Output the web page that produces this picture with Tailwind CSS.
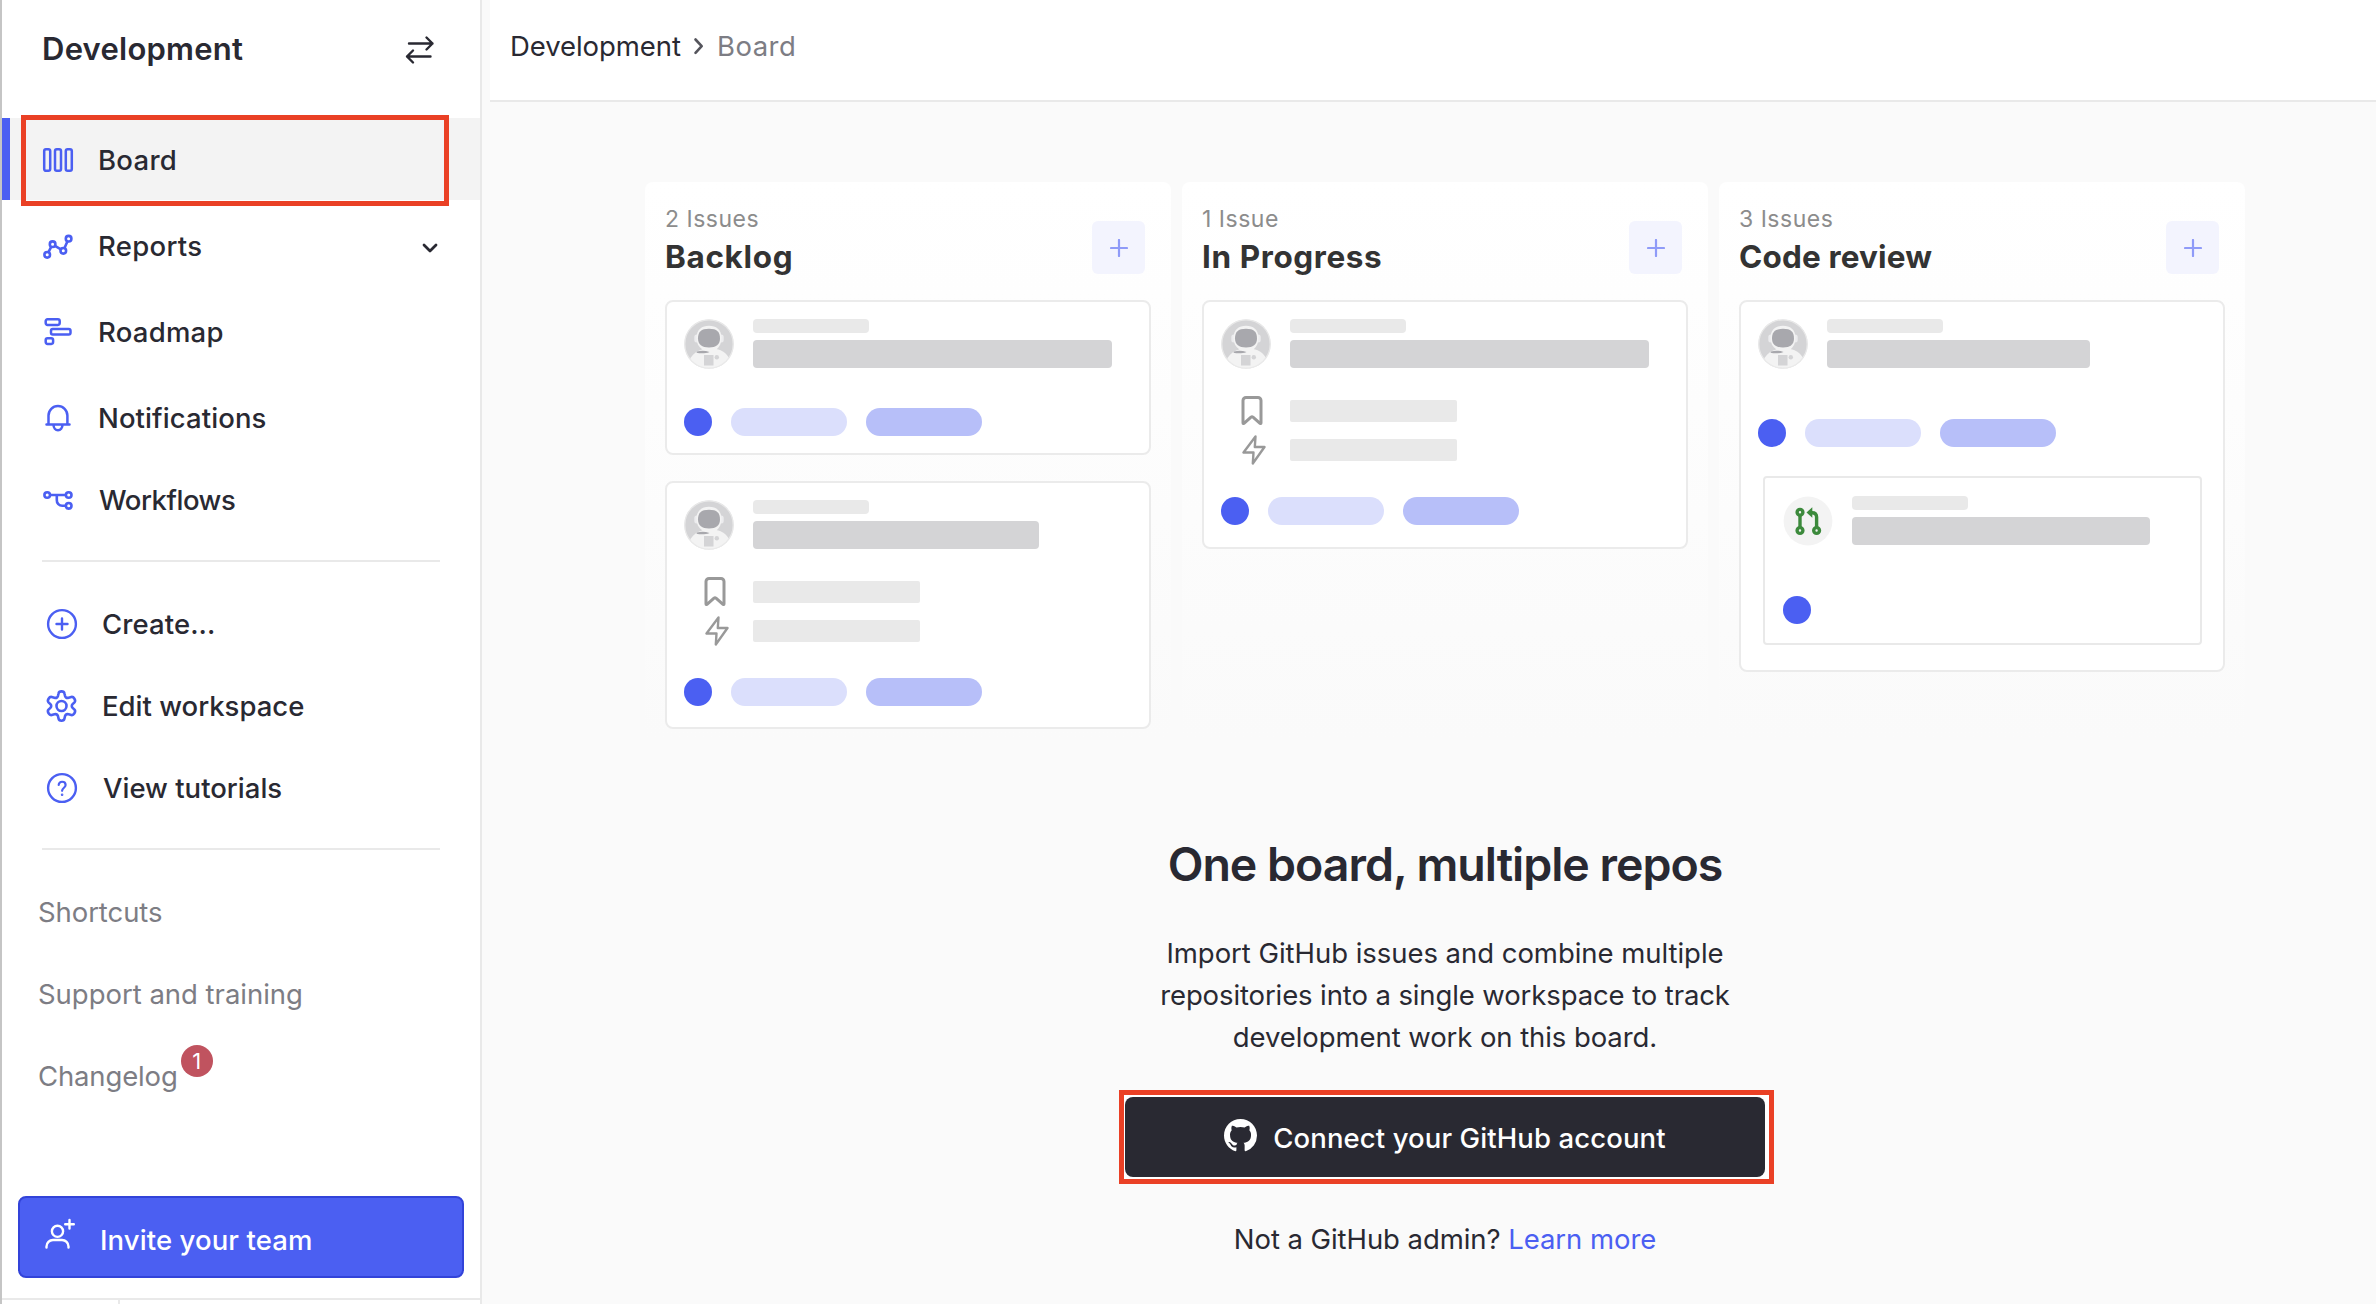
<!DOCTYPE html>
<html lang="en">
<head>
<meta charset="utf-8">
<title>Development board</title>
<script src="https://cdn.jsdelivr.net/npm/@tailwindcss/browser@4"></script>
</head>
<body class="w-[2376px] h-[1304px] overflow-hidden bg-[#fafafa] font-['Inter',sans-serif] text-[#292932] text-[27.5px] leading-[42px]">

<svg width="0" height="0" class="absolute">
  <defs>
    <symbol id="astronaut" viewBox="0 0 50 50">
      <clipPath id="face"><circle cx="25" cy="25" r="24.6"/></clipPath>
      <circle cx="25" cy="25" r="24.6" fill="#d4d4d6"/>
      <g clip-path="url(#face)">
        <path d="M4 45C7 34 15 31 20 30h12c6 1 13 5 15 14v8H4z" fill="#f3f3f3"/>
        <rect x="10.300" y="15.500" width="29.400" height="8" rx="2.500" fill="#ececee"/>
        <path d="M12.500 19C12.500 10.500 18 6.800 25 6.800S37.500 10.500 37.500 19c0 5-2 9-5 11.500L33 33H18l.5-2.500c-4-2.500-6-6.500-6-11.500z" fill="#f3f3f3"/>
        <path d="M14 19.500c0-6.500 3-9.700 11-9.700s11 3.200 11 9.700c0 6-4 9-11 9s-11-3-11-9z" fill="#a8a8ad"/>
        <path d="M13 32.500c4-1 8-1 12.500.4-4 1.800-9 1.800-13 .8z" fill="#a8a8ad"/>
        <rect x="20" y="36" width="9.500" height="10.500" fill="#d4d4d6"/>
        <circle cx="32.800" cy="38.200" r="2.200" fill="#d4d4d6"/>
      </g>
      <circle cx="25" cy="25" r="24.200" fill="none" stroke="#e9e9e9" stroke-width="1.200"/>
    </symbol>
    <symbol id="bookmark" viewBox="0 0 22 30">
      <path d="M2 27.500V5a3 3 0 0 1 3-3h12a3 3 0 0 1 3 3v22.500q0 1-1 .3L12 21.600q-1-.8-2 0L3 27.800q-1 .7-1-.3z" fill="none" stroke="#999" stroke-width="3" stroke-linejoin="round"/>
    </symbol>
    <symbol id="bolt" viewBox="0 0 24 30">
      <path d="M13.500 1.500L1.500 17.500H11.500L10.800 28.500L22.500 12H12.800z" fill="none" stroke="#999" stroke-width="2.400" stroke-linejoin="round"/>
    </symbol>
    <symbol id="plus" viewBox="0 0 18 18">
      <path d="M9 1v16M1 9h16" fill="none" stroke="#8f9bf8" stroke-width="2.200" stroke-linecap="round"/>
    </symbol>
  </defs>
</svg>

<div class="flex h-full">
  <!-- Sidebar -->
  <aside class="relative flex h-full w-[482px] shrink-0 flex-col border-l-2 border-r-2 border-l-[#c5c5c5] border-r-[#e9e9e9] bg-white font-medium">
    <div class="flex h-[118px] items-start justify-between pl-10 pr-[45px] pt-[27px]">
      <h1 class="text-[31px] leading-[44px] font-semibold tracking-[0.24px]">Development</h1>
      <svg class="mt-[8px] h-[30px] w-[30px]" viewBox="0 0 30 30" fill="none" stroke="#292932" stroke-width="2.400" stroke-linecap="round" stroke-linejoin="round"><path d="M4 8.500h23.500M21.500 2.500l6 6-6 6M25.500 21.500H2M8 15.500l-6 6 6 6"/></svg>
    </div>

    <nav class="flex flex-col">
      <a class="mb-1 flex h-[82px] items-center border-l-8 border-[#4b5ff2] bg-[#f3f3f3] pl-8 pt-[2px] tracking-[0.3px]">
        <svg class="mr-[24px] h-8 w-8" viewBox="0 0 32 32" fill="none" stroke="#4b5ff2" stroke-width="2.500"><rect x="2.200" y="5.200" width="6" height="21.600" rx="1.800"/><rect x="13" y="5.200" width="6" height="21.600" rx="1.800"/><rect x="23.800" y="5.200" width="6" height="21.600" rx="1.800"/></svg>
        Board
      </a>
      <a class="mb-1 flex h-[82px] items-center pl-10 pr-[42px] pt-[2px] tracking-[0.3px]">
        <svg class="mr-[24px] h-8 w-8" viewBox="0 0 32 32" fill="none" stroke="#4b5ff2" stroke-width="2.600"><circle cx="5.200" cy="24.800" r="2.800"/><circle cx="10.600" cy="14.200" r="2.800"/><circle cx="21.300" cy="20.800" r="2.800"/><circle cx="26.600" cy="8.700" r="2.800"/><path d="M6.500 22.200l2.800-5.500M13 15.900l5.900 3.400M22.400 18.200l3.100-7"/></svg>
        Reports
        <svg class="ml-auto mt-[3px] h-[10px] w-[16px]" viewBox="0 0 16 10" fill="none" stroke="#292932" stroke-width="2.800" stroke-linecap="round" stroke-linejoin="round"><path d="M2 2l6 6 6-6"/></svg>
      </a>
      <a class="mb-1 flex h-[82px] items-center pl-10 pt-[2px] tracking-[0.25px]">
        <svg class="mr-[24px] h-8 w-8" viewBox="0 0 32 32" fill="none" stroke="#4b5ff2" stroke-width="2.500"><rect x="3.700" y="3.300" width="14" height="5.600" rx="1.800"/><rect x="9" y="12.900" width="19.500" height="5.600" rx="1.800"/><rect x="3.700" y="22.300" width="7.400" height="5.600" rx="1.800"/></svg>
        Roadmap
      </a>
      <a class="flex h-[82px] items-center pl-10 pt-[2px] tracking-[0.1px]">
        <svg class="mr-[24px] h-8 w-8" viewBox="0 0 32 32" fill="none" stroke="#4b5ff2" stroke-width="2.500" stroke-linecap="round" stroke-linejoin="round"><path d="M4.500 22.500h23M6.500 22.500V13.500a9.300 9.300 0 0 1 18.900 0v9M11.500 22.800a4.500 5.500 0 0 0 9 0"/></svg>
        Notifications
      </a>
      <a class="flex h-[82px] items-center pl-10 pt-[2px] tracking-[-0.45px]">
        <svg class="mr-[25px] h-8 w-8" viewBox="0 0 32 32" fill="none" stroke="#4b5ff2" stroke-width="2.600"><circle cx="5.200" cy="11" r="2.800"/><circle cx="26.700" cy="11" r="2.800"/><circle cx="26.700" cy="21.800" r="2.800"/><path d="M8 11h15.800M14.800 11v5a5.500 5.500 0 0 0 5.500 5.800h3.600"/></svg>
        Workflows
      </a>
    </nav>
    <div class="ml-10 mt-[20px] h-[2px] w-[398px] bg-[#e9e9e9]"></div>

    <nav class="mt-[20px] flex flex-col">
      <a class="flex h-[82px] items-center pl-[43px] pt-[2px] tracking-[0.1px]">
        <svg class="mr-[23px] h-[34px] w-[34px]" viewBox="0 0 34 34" fill="none" stroke="#4b5ff2" stroke-width="2.400" stroke-linecap="round"><circle cx="17" cy="17" r="13.900"/><path d="M17 11.500v11M11.500 17h11"/></svg>
        Create...
      </a>
      <a class="flex h-[82px] items-center pl-[43px] pt-[2px]">
        <svg class="mr-[23px] h-[34px] w-[34px]" viewBox="0 0 34 34" fill="none" stroke="#4b5ff2" stroke-width="2.600" stroke-linejoin="round"><circle cx="16.500" cy="17" r="5"/><path d="M13.600 4.200C14 1.700 19 1.700 19.400 4.200L20 6.800C20.500 8.400 22 9.200 23.600 8.800L26.300 8C28.700 7.400 31.200 11.500 29.500 13.300L27.600 15.200C26.500 16.300 26.500 17.700 27.600 18.800L29.500 20.700C31.200 22.500 28.700 26.600 26.300 26L23.600 25.200C22 24.800 20.500 25.600 20 27.200L19.400 29.800C19 32.300 14 32.300 13.600 29.800L13 27.200C12.500 25.600 11 24.800 9.400 25.200L6.700 26C4.300 26.600 1.800 22.500 3.500 20.700L5.400 18.800C6.500 17.700 6.500 16.300 5.400 15.200L3.500 13.300C1.800 11.500 4.300 7.400 6.700 8L9.400 8.800C11 9.200 12.500 8.400 13 6.800z"/></svg>
        Edit workspace
      </a>
      <a class="flex h-[82px] items-center pl-[43px] pt-[2px]">
        <svg class="mr-[24px] h-[34px] w-[34px]" viewBox="0 0 34 34" fill="none" stroke="#4b5ff2" stroke-width="2.400" stroke-linecap="round"><circle cx="17" cy="17" r="13.900"/><path d="M13.700 14c0-4.400 6.900-4.200 6.900 0 0 2.800-3.500 2.700-3.500 5.800" stroke-width="2.200"/><circle cx="17.100" cy="23.700" r=".5" stroke-width="1.600"/></svg>
        View tutorials
      </a>
    </nav>
    <div class="ml-10 mt-[20px] h-[2px] w-[398px] bg-[#e9e9e9]"></div>

    <nav class="mt-[20px] flex flex-col pl-[36px] font-normal text-[#7d7d84]">
      <a class="flex h-[82px] items-center pt-[2px] tracking-[-0.08px]">Shortcuts</a>
      <a class="flex h-[82px] items-center pt-[2px] tracking-[-0.02px]">Support and training</a>
      <a class="flex h-[82px] items-center pt-[2px] tracking-[-0.14px]">Changelog
        <span class="mb-[31px] ml-[3px] flex h-8 w-8 items-center justify-center rounded-full bg-[#c0535f] text-[22px] leading-8 text-white">1</span>
      </a>
    </nav>

    <button class="mx-4 mt-[80px] flex h-[82px] w-[446px] items-center rounded-lg border-2 border-[#3243d9] bg-[#4b5ff2] pl-[24px] pt-[5px] text-left tracking-[0.1px] text-white">
      <svg class="mb-[13px] mr-[24px] h-[32px] w-[32px]" viewBox="0 0 32 32" fill="none" stroke="#fff" stroke-width="2.400" stroke-linecap="round"><circle cx="13.500" cy="14.300" r="5.600"/><path d="M2.500 30.500v-1a6.500 6.500 0 0 1 6.500-6.500h9a6.500 6.500 0 0 1 6.500 6.500v1M25.500 3v8.500M21.200 7.300h8.600"/></svg>
      Invite your team
    </button>
    <div class="mt-5 flex h-[6px] border-t-2 border-[#e9e9e9]"><div class="w-[118px] border-r-2 border-[#e9e9e9]"></div></div>

    <div class="absolute left-[19px] top-[115px] h-[91px] w-[428px] border-[5px] border-[#ea4025]"></div>
  </aside>

  <!-- Main area -->
  <main class="ml-2 flex flex-1 flex-col">
    <header class="flex h-[102px] items-start border-b-2 border-[#e9e9e9] bg-white pl-5 pt-[25px]">
      <span class="tracking-[-0.07px]">Development</span>
      <svg class="ml-[12px] mr-[12px] mt-[11px] h-[20px] w-[12px]" viewBox="0 0 12 20" fill="none" stroke="#55555c" stroke-width="2.600" stroke-linecap="round" stroke-linejoin="round"><path d="M2.500 3.500l6.200 6.700-6.200 6.700"/></svg>
      <span class="tracking-[0.5px] text-[#7d7d84]">Board</span>
    </header>

    <!-- Board preview -->
    <section class="ml-[155px] mt-20 flex h-[560px] gap-[11px]">
      <div class="w-[526px] rounded-t-lg bg-linear-to-b from-white to-[#fafafa] px-5">
        <div class="flex h-[118px] items-start justify-between pr-[6px] pt-[23px]">
          <div>
            <p class="text-[23px] leading-[28px] tracking-[0.5px] text-[#8c8c8c]">2 Issues</p>
            <h2 class="mt-[6px] text-[31.5px] leading-[36px] font-bold tracking-[0.65px] text-[#333]">Backlog</h2>
          </div>
          <div class="mt-4 flex size-[53px] items-center justify-center rounded-md bg-[#f3f4fe]"><svg class="size-[18px]"><use href="#plus"/></svg></div>
        </div>
        <div class="flex h-[155px] flex-col justify-between rounded-lg border-2 border-[#ebebeb] bg-white px-[17px] pb-[17px] pt-[17px]">
          <div class="flex gap-[19px]">
            <svg class="size-[50px]"><use href="#astronaut"/></svg>
            <div class="flex flex-col gap-[7px]"><div class="h-[14px] w-[116px] rounded bg-[#e9e9e9]"></div><div class="h-[28px] w-[359px] rounded bg-[#d4d4d6]"></div></div>
          </div>
          <div class="flex gap-[19px]"><div class="size-7 rounded-full bg-[#4b5ff2]"></div><div class="h-7 w-[116px] rounded-full bg-[#dbdffc]"></div><div class="h-7 w-[116px] rounded-full bg-[#b7bff9]"></div></div>
        </div>
        <div class="mt-[26px] flex h-[248px] flex-col rounded-lg border-2 border-[#ebebeb] bg-white px-[17px] pt-[17px]">
          <div class="flex gap-[19px]">
            <svg class="size-[50px]"><use href="#astronaut"/></svg>
            <div class="flex flex-col gap-[7px]"><div class="h-[14px] w-[116px] rounded bg-[#e9e9e9]"></div><div class="h-[28px] w-[286px] rounded bg-[#d4d4d6]"></div></div>
          </div>
          <div class="ml-[20px] mt-[26px] flex items-center gap-[27px]"><svg class="h-[31px] w-[22px]"><use href="#bookmark"/></svg><div class="h-[22px] w-[167px] rounded-xs bg-[#e9e9e9]"></div></div>
          <div class="ml-[21px] mt-[9px] flex items-center gap-[24px]"><svg class="h-[30px] w-[24px]"><use href="#bolt"/></svg><div class="h-[22px] w-[167px] rounded-xs bg-[#e9e9e9]"></div></div>
          <div class="mt-[32px] flex gap-[19px]"><div class="size-7 rounded-full bg-[#4b5ff2]"></div><div class="h-7 w-[116px] rounded-full bg-[#dbdffc]"></div><div class="h-7 w-[116px] rounded-full bg-[#b7bff9]"></div></div>
        </div>
      </div>

      <div class="w-[526px] rounded-t-lg bg-linear-to-b from-white to-[#fafafa] px-5">
        <div class="flex h-[118px] items-start justify-between pr-[6px] pt-[23px]">
          <div>
            <p class="text-[23px] leading-[28px] tracking-[0.5px] text-[#8c8c8c]">1 Issue</p>
            <h2 class="mt-[6px] text-[31.5px] leading-[36px] font-bold tracking-[0.6px] text-[#333]">In Progress</h2>
          </div>
          <div class="mt-4 flex size-[53px] items-center justify-center rounded-md bg-[#f3f4fe]"><svg class="size-[18px]"><use href="#plus"/></svg></div>
        </div>
        <div class="flex h-[249px] flex-col rounded-lg border-2 border-[#ebebeb] bg-white px-[17px] pt-[17px]">
          <div class="flex gap-[19px]">
            <svg class="size-[50px]"><use href="#astronaut"/></svg>
            <div class="flex flex-col gap-[7px]"><div class="h-[14px] w-[116px] rounded bg-[#e9e9e9]"></div><div class="h-[28px] w-[359px] rounded bg-[#d4d4d6]"></div></div>
          </div>
          <div class="ml-[20px] mt-[26px] flex items-center gap-[27px]"><svg class="h-[31px] w-[22px]"><use href="#bookmark"/></svg><div class="h-[22px] w-[167px] rounded-xs bg-[#e9e9e9]"></div></div>
          <div class="ml-[21px] mt-[9px] flex items-center gap-[24px]"><svg class="h-[30px] w-[24px]"><use href="#bolt"/></svg><div class="h-[22px] w-[167px] rounded-xs bg-[#e9e9e9]"></div></div>
          <div class="mt-[32px] flex gap-[19px]"><div class="size-7 rounded-full bg-[#4b5ff2]"></div><div class="h-7 w-[116px] rounded-full bg-[#dbdffc]"></div><div class="h-7 w-[116px] rounded-full bg-[#b7bff9]"></div></div>
        </div>
      </div>

      <div class="w-[526px] rounded-t-lg bg-linear-to-b from-white to-[#fafafa] px-5">
        <div class="flex h-[118px] items-start justify-between pr-[6px] pt-[23px]">
          <div>
            <p class="text-[23px] leading-[28px] tracking-[0.5px] text-[#8c8c8c]">3 Issues</p>
            <h2 class="mt-[6px] text-[31.5px] leading-[36px] font-bold tracking-[0.15px] text-[#333]">Code review</h2>
          </div>
          <div class="mt-4 flex size-[53px] items-center justify-center rounded-md bg-[#f3f4fe]"><svg class="size-[18px]"><use href="#plus"/></svg></div>
        </div>
        <div class="flex h-[372px] flex-col rounded-lg border-2 border-[#ebebeb] bg-white px-[17px] pt-[17px]">
          <div class="flex gap-[19px]">
            <svg class="size-[50px]"><use href="#astronaut"/></svg>
            <div class="flex flex-col gap-[7px]"><div class="h-[14px] w-[116px] rounded bg-[#e9e9e9]"></div><div class="h-[28px] w-[263px] rounded bg-[#d4d4d6]"></div></div>
          </div>
          <div class="mt-[50px] flex gap-[19px]"><div class="size-7 rounded-full bg-[#4b5ff2]"></div><div class="h-7 w-[116px] rounded-full bg-[#dbdffc]"></div><div class="h-7 w-[116px] rounded-full bg-[#b7bff9]"></div></div>
          <div class="ml-[5px] mt-[29px] flex h-[169px] w-[439px] flex-col justify-between rounded border-2 border-[#e9e9e9] px-[18px] pb-[19px] pt-[18px]">
            <div class="flex gap-[19px]">
              <svg class="size-[50px]" viewBox="0 0 50 50" fill="none"><circle cx="25" cy="25" r="24.400" fill="#f3f3f3"/><g stroke="#3c8a3c" stroke-width="3.400"><circle cx="17" cy="16.300" r="2.900"/><circle cx="17" cy="34.500" r="2.900"/><circle cx="33.600" cy="34.500" r="2.900"/><path d="M17 19.500v12M33.600 31.500V21c0-3-1.500-4.300-4.500-4.300h-1.500"/></g><path d="M23.500 16.500l5.800-5.300v10.600z" fill="#3c8a3c"/></svg>
              <div class="flex flex-col gap-[7px]"><div class="h-[14px] w-[116px] rounded bg-[#e9e9e9]"></div><div class="h-[28px] w-[298px] rounded bg-[#d4d4d6]"></div></div>
            </div>
            <div class="size-7 rounded-full bg-[#4b5ff2]"></div>
          </div>
        </div>
      </div>
    </section>

    <!-- Call to action -->
    <section class="ml-[24px] mt-[94px] flex flex-col items-center text-center">
      <h2 class="text-[46.5px] leading-[56px] font-semibold tracking-[-1.01px]">One board, multiple repos</h2>
      <p class="mt-10 whitespace-nowrap"><span class="tracking-[-0.04px]">Import GitHub issues and combine multiple</span><br><span class="tracking-[-0.11px]">repositories into a single workspace to track</span><br><span class="tracking-[-0.08px]">development work on this board.</span></p>
      <div class="ml-[3px] mt-8 h-[94px] w-[655px] border-[5px] border-[#ea4025] bg-white py-[2px] pl-[1px] pr-[4px]">
        <button class="flex h-[80px] w-full items-center justify-center rounded-lg bg-[#292932] pt-[2px] font-medium tracking-[0.1px] text-white">
          <svg class="mb-[5px] mr-[16px] size-[33px]" viewBox="0 0 16 16" fill="#fff"><path d="M8 0C3.580 0 0 3.580 0 8c0 3.540 2.290 6.530 5.470 7.590.4.070.55-.17.55-.38 0-.19-.01-.82-.01-1.490-2.010.37-2.530-.49-2.690-.94-.09-.23-.48-.94-.82-1.130-.28-.15-.68-.52-.01-.53.63-.01 1.080.58 1.230.82.72 1.210 1.870.87 2.330.66.07-.52.28-.87.51-1.070-1.780-.2-3.640-.89-3.640-3.950 0-.87.31-1.590.82-2.150-.08-.2-.36-1.020.08-2.120 0 0 .67-.21 2.200.82.64-.18 1.320-.27 2-.27s1.360.09 2 .27c1.530-1.040 2.200-.82 2.200-.82.44 1.100.16 1.920.08 2.120.51.56.82 1.270.82 2.150 0 3.070-1.870 3.750-3.650 3.950.29.25.54.73.54 1.480 0 1.070-.01 1.930-.01 2.200 0 .21.15.46.55.38A8.010 8.010 0 0 0 16 8c0-4.420-3.580-8-8-8z"/></svg>
          Connect your GitHub account
        </button>
      </div>
      <p class="mt-[34px] tracking-[-0.06px]">Not a GitHub admin? <a class="text-[#4b5ff2]">Learn more</a></p>
    </section>
  </main>
</div>
</body>
</html>
